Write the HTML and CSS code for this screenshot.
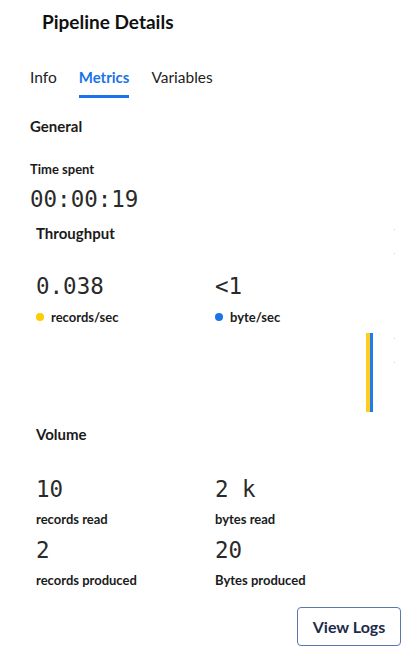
FILE: index.html
```html
<!DOCTYPE html>
<html>
<head>
<meta charset="utf-8">
<link rel="stylesheet" href="styles.css">
</head>
<body>
<div class="panel">
  <h1 class="title">Pipeline Details</h1>
  <nav class="tabs">
    <span class="tab">Info</span>
    <span class="tab active">Metrics</span>
    <span class="tab">Variables</span>
  </nav>
  <section class="general">
    <h2 class="section-title">General</h2>
    <div class="label">Time spent</div>
    <div class="num">00:00:19</div>
  </section>
  <section class="throughput">
    <h2 class="section-title">Throughput</h2>
    <div class="grid two">
      <div class="metric">
        <div class="num">0.038</div>
        <div class="legend"><span class="dot yellow"></span>records/sec</div>
      </div>
      <div class="metric">
        <div class="num">&lt;1</div>
        <div class="legend"><span class="dot blue"></span>byte/sec</div>
      </div>
    </div>
    <div class="chart">
      <div class="bar"><span class="seg yellow"></span><span class="seg blue"></span></div>
      <span class="tick t1"></span>
      <span class="tick t2"></span>
      <span class="tick t3"></span>
      <span class="tick t4"></span>
    </div>
  </section>
  <section class="volume">
    <h2 class="section-title">Volume</h2>
    <div class="grid two vgrid">
      <div class="metric">
        <div class="num">10</div>
        <div class="label2">records read</div>
      </div>
      <div class="metric">
        <div class="num">2 k</div>
        <div class="label2">bytes read</div>
      </div>
      <div class="metric">
        <div class="num">2</div>
        <div class="label2">records produced</div>
      </div>
      <div class="metric">
        <div class="num">20</div>
        <div class="label2">Bytes produced</div>
      </div>
    </div>
  </section>
  <div class="actions">
    <button class="btn">View Logs</button>
  </div>
</div>
</body>
</html>
```
FILE: styles.css
```css
* { box-sizing: border-box; }
html, body { margin: 0; padding: 0; background: #fff; }
body {
  font-family: Lato, "Noto Sans", sans-serif;
  color: #1b1b1b;
  width: 406px;
  height: 650px;
  overflow: hidden;
}
.panel { position: relative; }
.title {
  margin: 0;
  padding: 10px 0 0 42px;
  font-size: 19px;
  line-height: 24px;
  font-weight: 700;
  color: #111;
}
.tabs {
  display: flex;
  gap: 22px;
  padding: 33px 0 0 30px;
}
.tab {
  font-size: 15.5px;
  line-height: 20px;
  padding-bottom: 8px;
  color: #222;
  border-bottom: 3px solid transparent;
}
.tab.active {
  color: #1a73e8;
  border-bottom-color: #1a73e8;
  font-weight: 700;
  font-size: 15px;
}
.section-title {
  margin: 0;
  font-size: 15px;
  line-height: 20px;
  font-weight: 700;
  color: #1b1b1b;
}
.general { padding: 18px 0 0 30px; }
.general .label {
  margin-top: 25px;
  font-size: 13px;
  line-height: 16px;
  font-weight: 700;
}
.num {
  font-family: "DejaVu Sans Mono", monospace;
  font-size: 22.5px;
  line-height: 28px;
  color: #2a2a2a;
}
.general .num { margin-top: 8px; }
.throughput { padding: 10px 0 0 36px; position: relative; }
.grid.two {
  display: grid;
  grid-template-columns: 179px 1fr;
}
.throughput .grid { margin-top: 29px; }
.legend {
  display: flex;
  align-items: center;
  margin-top: 9px;
  font-size: 13px;
  line-height: 16px;
  font-weight: 700;
}
.dot {
  width: 8px;
  height: 8px;
  border-radius: 50%;
  margin-right: 7px;
}
.yellow { background: #ffcc00; }
.blue { background: #1a73e8; }
.chart {
  height: 99px;
  position: relative;
}
.bar {
  position: absolute;
  left: 330px;
  top: 8px;
  height: 79px;
  display: flex;
}
.seg { display: block; height: 100%; }
.seg.yellow { width: 4px; background: #ffcc22; }
.seg.blue { width: 3px; background: #1f7cf0; }
.tick {
  position: absolute;
  left: 358px;
  width: 1px;
  height: 1px;
  background: #c9c4ff;
}
.t1 { top: -96px; }
.t2 { top: -72px; }
.t3 { top: 13px; }
.t4 { top: 37px; }
.volume { padding: 0 0 0 36px; }
.vgrid { margin-top: 31px; row-gap: 9px; grid-template-columns: 176px 1fr; }
.label2 {
  margin-top: 8px;
  font-size: 13px;
  line-height: 16px;
  font-weight: 700;
}
.actions {
  display: flex;
  justify-content: flex-end;
  padding: 19px 5px 0 0;
}
.btn {
  width: 104px;
  height: 39px;
  border: 1px solid #5b76b0;
  border-radius: 4px;
  background: #fff;
  font-family: Lato, "Noto Sans", sans-serif;
  font-size: 16px;
  font-weight: 700;
  color: #1c2b4a;
}
```
